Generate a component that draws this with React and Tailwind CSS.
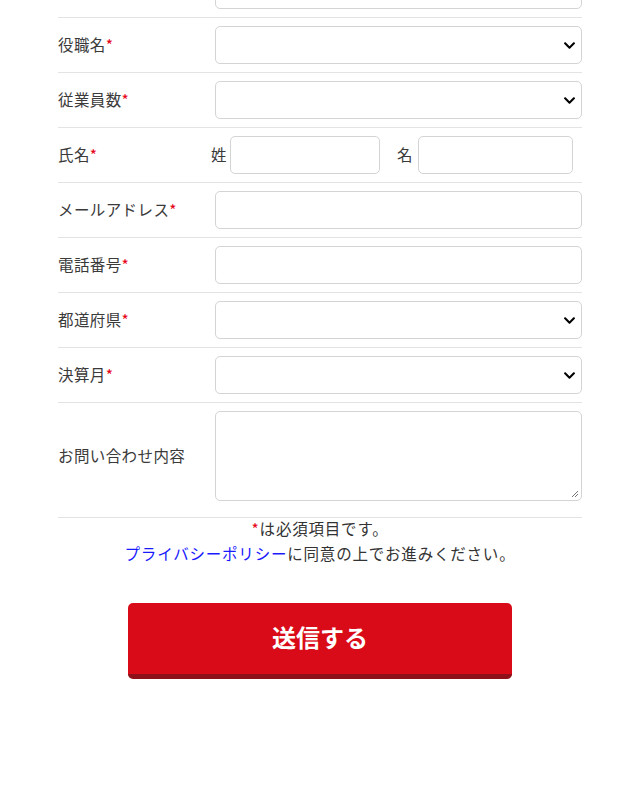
import { FaChevronDown } from "react-icons/fa";

const FONT = { fontFamily: '"Noto Sans CJK JP", "Noto Sans", sans-serif' };

/* ── label with required mark ── */
function Label({ text, required }) {
  return (
    <div className="w-[157px] shrink-0 text-[15.5px] tracking-[0.4px] text-[#3a3a3a]">
      {text}
      {required && <span className="text-[#e60012]">*</span>}
    </div>
  );
}

function Select() {
  return (
    <div className="relative flex-1 h-[38px] rounded-[5px] border border-[#d4d4d4] bg-white">
      <FaChevronDown className="absolute right-[5px] top-[12px] text-[13px] text-black" />
    </div>
  );
}

function Input({ className = "flex-1" }) {
  return <div className={`${className} h-[38px] rounded-[5px] border border-[#d4d4d4] bg-white`} />;
}

function Row({ children }) {
  return <div className="flex items-center border-b border-[#e3e3e3] py-[8px]">{children}</div>;
}

export default function App() {
  return (
    <div className="min-h-[792px] bg-white overflow-hidden" style={FONT}>
      <div className="mx-[58px] mt-[-37px]">
        <Row>
          <Label text="会社名" required />
          <Input />
        </Row>
        <Row>
          <Label text="役職名" required />
          <Select />
        </Row>
        <Row>
          <Label text="従業員数" required />
          <Select />
        </Row>
        <Row>
          <Label text="氏名" required />
          <div className="flex flex-1 items-center">
            <span className="ml-[-4px] w-[19px] text-[15.5px] text-[#3a3a3a]">姓</span>
            <Input className="w-[150px]" />
            <span className="ml-[17px] w-[21px] text-[15.5px] text-[#3a3a3a]">名</span>
            <Input className="w-[155px]" />
          </div>
        </Row>
        <Row>
          <Label text="メールアドレス" required />
          <Input />
        </Row>
        <Row>
          <Label text="電話番号" required />
          <Input />
        </Row>
        <Row>
          <Label text="都道府県" required />
          <Select />
        </Row>
        <Row>
          <Label text="決算月" required />
          <Select />
        </Row>
        <div className="flex items-center border-b border-[#e3e3e3] pt-[8px] pb-[16px]">
          <Label text="お問い合わせ内容" />
          <div className="relative flex-1 h-[90px] rounded-[5px] border border-[#d4d4d4] bg-white">
            <svg className="absolute right-[2px] bottom-[2px]" width="9" height="9" viewBox="0 0 9 9">
              <path d="M8 2 L2 8 M8 5 L5 8" stroke="#777" strokeWidth="1" />
            </svg>
          </div>
        </div>

        <div className="mt-[-2px] text-center text-[15.5px] tracking-[0.8px] leading-[25px] text-[#333]">
          <p>
            <span className="text-[#e60012]">*</span>は必須項目です。
          </p>
          <p>
            <a className="text-[#1a1aff]">プライバシーポリシー</a>に同意の上でお進みください。
          </p>
        </div>

        <div className="mt-[37px] flex justify-center">
          <button className="w-[384px] h-[76px] pb-[4px] rounded-[5px] bg-[#d90b18] border-b-[5px] border-[#8e1018] text-[24px] font-bold text-white">
            送信する
          </button>
        </div>
      </div>
    </div>
  );
}
